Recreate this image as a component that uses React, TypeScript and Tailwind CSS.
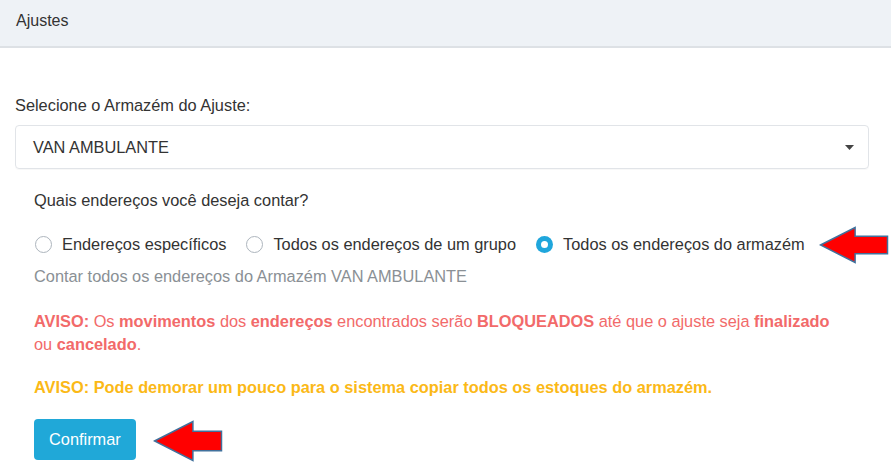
import React, { useState } from "react";

const font = { fontFamily: '"Liberation Sans", Arial, sans-serif' };

function Arrow({ w, h }: { w: number; h: number }) {
  // left-pointing block arrow, like an Office shape
  const head = h * 0.95;
  return (
    <svg width={w} height={h} viewBox={`0 0 ${w} ${h}`}>
      <polygon
        points={`1.5,${h / 2} ${head},1.5 ${head},${h * 0.27} ${w - 1.5},${h * 0.27} ${w - 1.5},${h * 0.73} ${head},${h * 0.73} ${head},${h - 1.5}`}
        fill="#ff0000"
        stroke="#41719c"
        strokeWidth="1.5"
      />
    </svg>
  );
}

function Radio({ checked, label, onClick }: { checked: boolean; label: string; onClick: () => void }) {
  return (
    <label className="flex items-center gap-[10px] cursor-pointer shrink-0 whitespace-nowrap" onClick={onClick}>
      {checked ? (
        <span className="w-[17px] h-[17px] shrink-0 rounded-full bg-[#1fa6dc] flex items-center justify-center">
          <span className="w-[7px] h-[7px] rounded-full bg-white" />
        </span>
      ) : (
        <span className="w-[17px] h-[17px] shrink-0 rounded-full border border-[#adb5bd] bg-white" />
      )}
      <span className="text-[#333]">{label}</span>
    </label>
  );
}

export default function App() {
  const [tipo, setTipo] = useState(2);
  const opcoes = ["Endereços específicos", "Todos os endereços de um grupo", "Todos os endereços do armazém"];

  return (
    <div className="w-[891px] h-[467px] bg-white text-[16.35px] leading-[24px] text-[#333] overflow-hidden" style={font}>
      <div className="h-[48px] bg-[#eef2f6] border-b-2 border-[#dde1e5] px-[16px] flex items-center">
        <span className="text-[16px] text-[#333] pb-[4px]">Ajustes</span>
      </div>

      <div className="pl-[15px] pr-[22px] pt-[45px]">
        <div className="mb-[8px]">Selecione o Armazém do Ajuste:</div>
        <div className="h-[44px] border border-[#e1e4e8] rounded-[4px] flex items-center justify-between pl-[17px] pr-[14px] shadow-[0_1px_1px_rgba(0,0,0,0.03)]">
          <span>VAN AMBULANTE</span>
          <svg width="9" height="5" viewBox="0 0 9 5">
            <polygon points="0,0 9,0 4.5,5" fill="#444" />
          </svg>
        </div>

        <div className="pl-[19px]">
          <div className="mt-[19px]">Quais endereços você deseja contar?</div>
          <div className="mt-[13px] h-[38px] flex items-center">
            <div className="flex items-center gap-[20px] pl-[1px] shrink-0">
              {opcoes.map((o, i) => (
                <Radio key={i} checked={tipo === i} label={o} onClick={() => setTipo(i)} />
              ))}
            </div>
            <div className="ml-[14px] mt-[1px] shrink-0">
              <Arrow w={70} h={38} />
            </div>
          </div>
          <div className="mt-[1px] text-[#8a9095]">Contar todos os endereços do Armazém VAN AMBULANTE</div>

          <p className="mt-[22px] leading-[23px] text-[#f26a6a]">
            <b>AVISO:</b> Os <b>movimentos</b> dos <b>endereços</b> encontrados serão <b>BLOQUEADOS</b> até que o ajuste seja <b>finalizado</b>
            <br />
            ou <b>cancelado</b>.
          </p>

          <p className="mt-[19px] font-bold text-[#fbb917] whitespace-nowrap">
            AVISO: Pode demorar um pouco para o sistema copiar todos os estoques do armazém.
          </p>

          <div className="mt-[17px] flex items-center gap-[17px]">
            <button className="h-[41px] px-[15px] rounded-[4px] bg-[#20a8d8] text-white">Confirmar</button>
            <div className="mt-[4px]">
              <Arrow w={70} h={42} />
            </div>
          </div>
        </div>
      </div>
    </div>
  );
}
